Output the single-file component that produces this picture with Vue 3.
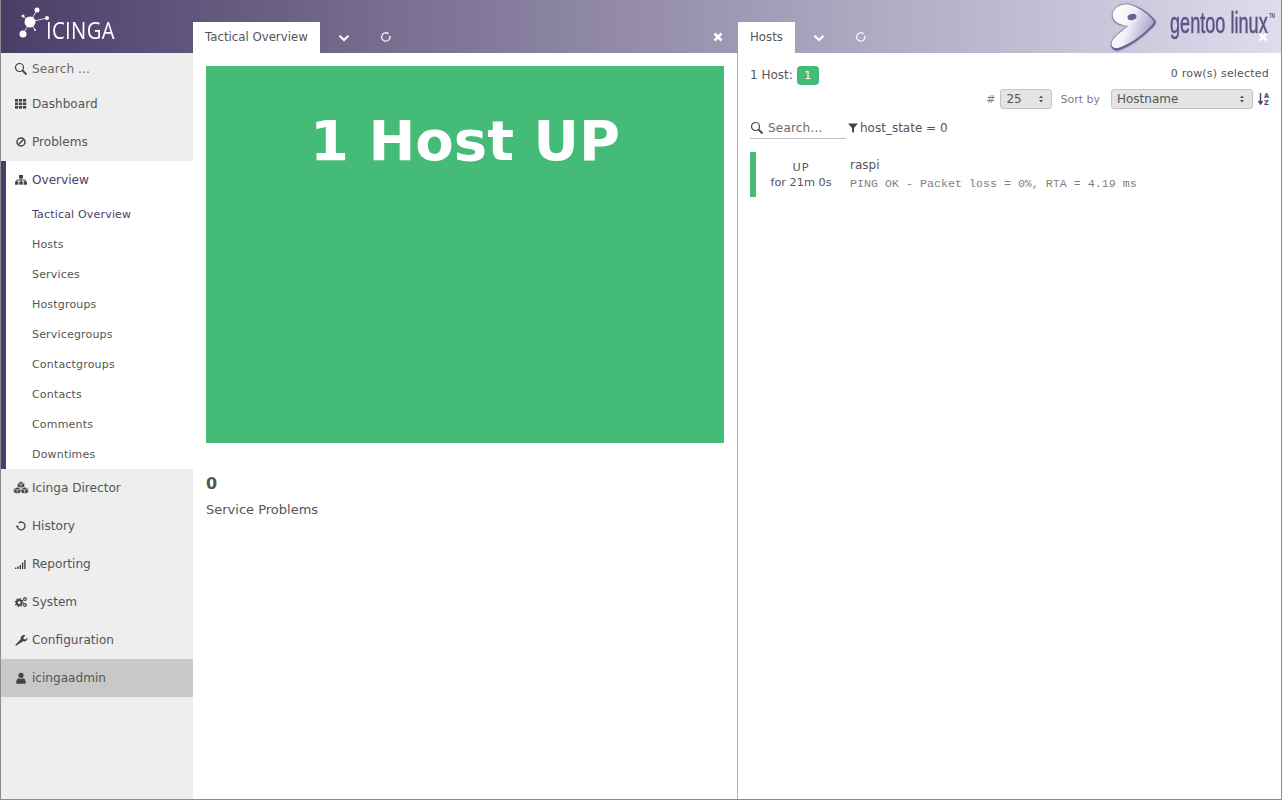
<script setup>
import { ref } from "vue";

// top level menu, the ones above and below the open Overview section
const topItems = ref([
  { label: "Dashboard", icon: "grid" },
  { label: "Problems", icon: "ban" },
]);
const subItems = ref([
  "Tactical Overview",
  "Hosts",
  "Services",
  "Hostgroups",
  "Servicegroups",
  "Contactgroups",
  "Contacts",
  "Comments",
  "Downtimes",
]);
const bottomItems = ref([
  { label: "Icinga Director", icon: "cubes" },
  { label: "History", icon: "history" },
  { label: "Reporting", icon: "signal" },
  { label: "System", icon: "cogs" },
  { label: "Configuration", icon: "wrench" },
]);
</script>

<template>
  <div class="window">
    <header class="topbar">
      <!-- theme logo sits behind the tab bar actions -->
      <div class="gentoo">
        <svg width="60" height="53" viewBox="0 0 60 53">
          <defs>
            <linearGradient id="gbody" x1="0" y1="0" x2="1" y2="0.4">
              <stop offset="0" stop-color="#ffffff" />
              <stop offset="0.5" stop-color="#f4f2f9" />
              <stop offset="1" stop-color="#aaa3cb" />
            </linearGradient>
            <filter id="gshade" x="-20%" y="-20%" width="140%" height="140%">
              <feGaussianBlur stdDeviation="1.300" />
            </filter>
          </defs>
          <path d="M12 15C13 8 21 3 29 4 39 6 50 14 55 20c2 3 0 5-3 8C43 37 31 46 20 50c-5 2-9-1-9-6 0-5 7-11 17-18C20 26 12 23 12 15z" fill="#6a6194" opacity="0.55" filter="url(#gshade)" />
          <path d="M12 15C13 8 21 3 29 4 39 6 50 14 55 20c2 3 0 5-3 8C43 37 31 46 20 50c-5 2-9-1-9-6 0-5 7-11 17-18C20 26 12 23 12 15z" fill="#6a6194" />
          <path d="M12.500 14.500C13.500 8 21 3.500 29 4.500 38 6.500 48 14 53 20c1.500 2.500 0 4-3 7C42 35.500 30 44 19.500 47.500c-4.500 1.500-8 0-8-4 0-4 7-10.500 17-17.500C20.500 25.500 12.500 22 12.500 14.500z" fill="url(#gbody)" />
          <ellipse cx="32" cy="17" rx="4.500" ry="3" fill="#6b6294" transform="rotate(-12 32 17)" />
        </svg>
        <span class="gentoo-word">gentoo linux</span>
        <span class="gentoo-tm">TM</span>
      </div>
      <div class="brand">
        <svg class="brand-mark" width="34" height="34" viewBox="18 6 34 34">
          <g stroke="#fff" stroke-width="0.800">
            <line x1="30" y1="22" x2="23" y2="16" />
            <line x1="30" y1="22" x2="37" y2="10" />
            <line x1="30" y1="22" x2="47" y2="18" />
            <line x1="30" y1="22" x2="23" y2="34" />
            <line x1="30" y1="22" x2="35" y2="30" />
          </g>
          <circle cx="30" cy="22" r="5.500" fill="#fff" />
          <circle cx="23" cy="34" r="3.500" fill="#fff" />
          <circle cx="37" cy="10" r="2.500" fill="#fff" />
          <circle cx="47" cy="18" r="2" fill="#fff" />
          <circle cx="23" cy="16" r="1.500" fill="#fff" />
          <circle cx="35" cy="30" r="1" fill="#fff" />
        </svg>
        <span class="brand-word">ICINGA</span>
      </div>
      <div class="tabs tabs-main">
        <div class="tab">Tactical Overview</div>
        <svg class="act chevron" width="12" height="8" viewBox="0 0 12 8"><path d="M1.500 1.800 6 6l4.500-4.200" /></svg>
        <svg class="act reload" width="12" height="12" viewBox="0 0 12 12"><path d="M10 6.500A4.200 4.200 0 1 1 8.600 2.800" /><path class="fill" d="M11.400 6.600 8.400 6.600 9.900 4.400z" /></svg>
        <svg class="act close" width="10" height="10" viewBox="0 0 10 10"><path d="M1.500 1.500l7 7M8.500 1.500l-7 7" /></svg>
      </div>
      <div class="tabs tabs-side">
        <div class="tab">Hosts</div>
        <svg class="act chevron" width="12" height="8" viewBox="0 0 12 8"><path d="M1.500 1.800 6 6l4.500-4.200" /></svg>
        <svg class="act reload" width="12" height="12" viewBox="0 0 12 12"><path d="M10 6.500A4.200 4.200 0 1 1 8.600 2.800" /><path class="fill" d="M11.400 6.600 8.400 6.600 9.900 4.400z" /></svg>
        <svg class="act close" width="10" height="10" viewBox="0 0 10 10"><path d="M1.500 1.500l7 7M8.500 1.500l-7 7" /></svg>
      </div>
    </header>

    <div class="body">
      <aside class="sidebar">
        <div class="search">
          <svg class="nav-icon" width="14" height="14" viewBox="0 0 14 14"><circle cx="5.500" cy="5.500" r="4" fill="none" stroke="#444" stroke-width="1.200" /><path d="M8.500 8.500l4 4" stroke="#444" stroke-width="1.800" /></svg>
          <span>Search ...</span>
        </div>
        <div v-for="item in topItems" :key="item.label" class="nav-row">
          <svg class="nav-icon" width="14" height="14" viewBox="0 0 14 14"><use :href="'#i-' + item.icon" /></svg>
          <span>{{ item.label }}</span>
        </div>
        <section class="open-section">
          <div class="nav-row open-title">
            <svg class="nav-icon" width="14" height="14" viewBox="0 0 14 14"><use href="#i-sitemap" /></svg>
            <span>Overview</span>
          </div>
          <div
            v-for="(sub, i) in subItems"
            :key="sub"
            class="sub-row"
            :class="{ active: i === 0 }"
          >
            {{ sub }}
          </div>
        </section>
        <div v-for="item in bottomItems" :key="item.label" class="nav-row">
          <svg class="nav-icon" width="14" height="14" viewBox="0 0 14 14"><use :href="'#i-' + item.icon" /></svg>
          <span>{{ item.label }}</span>
        </div>
        <div class="nav-row user-row">
          <svg class="nav-icon" width="14" height="14" viewBox="0 0 14 14"><use href="#i-user" /></svg>
          <span>icingaadmin</span>
        </div>
      </aside>

      <main class="col-main">
        <div class="tile">1 Host UP</div>
        <div class="count">0</div>
        <div class="count-label">Service Problems</div>
      </main>

      <section class="col-side">
        <div class="summary-row">
          <div class="summary">1 Host: <span class="badge">1</span></div>
          <div class="selected">0 row(s) selected</div>
        </div>
        <div class="controls">
          <span class="ctl-label">#</span>
          <div class="select select-small"><span>25</span><svg width="6" height="8" viewBox="0 0 6 8"><path d="M3 0.500 5 3H1zM3 7.500 1 5h4z" /></svg></div>
          <span class="ctl-label sort-label">Sort by</span>
          <div class="select select-large"><span>Hostname</span><svg width="6" height="8" viewBox="0 0 6 8"><path d="M3 0.500 5 3H1zM3 7.500 1 5h4z" /></svg></div>
          <svg class="sort-icon" width="12" height="14" viewBox="0 0 12 14">
            <path d="M2.500 1v10M0.500 9l2 3 2-3" fill="none" stroke="#4a3f6b" stroke-width="1.400" />
            <text x="6" y="6" class="az">A</text>
            <text x="6" y="13" class="az">Z</text>
          </svg>
        </div>
        <div class="filter-row">
          <div class="list-search">
            <svg width="14" height="14" viewBox="0 0 14 14"><circle cx="5.500" cy="5.500" r="4" fill="none" stroke="#444" stroke-width="1.200" /><path d="M8.500 8.500l4 4" stroke="#444" stroke-width="1.800" /></svg>
            <span>Search...</span>
          </div>
          <div class="filter">
            <svg width="10" height="10" viewBox="0 0 10 10"><path d="M0 0.500h10L6 5v5L4 8.500V5z" fill="#444" /></svg>
            <span>host_state = 0</span>
          </div>
        </div>
        <div class="host-row">
          <div class="host-state">
            <div class="state-name">UP</div>
            <div class="state-since">for 21m 0s</div>
          </div>
          <div class="host-info">
            <div class="host-name">raspi</div>
            <div class="host-output">PING OK - Packet loss = 0%, RTA = 4.19 ms</div>
          </div>
        </div>
      </section>
    </div>

    <!-- shared icon shapes -->
    <svg class="defs" width="0" height="0">
      <defs>
        <g id="i-grid" fill="#444">
          <rect x="1" y="2" width="3.200" height="2.600" /><rect x="5" y="2" width="3.200" height="2.600" /><rect x="9" y="2" width="3.200" height="2.600" />
          <rect x="1" y="5.500" width="3.200" height="2.600" /><rect x="5" y="5.500" width="3.200" height="2.600" /><rect x="9" y="5.500" width="3.200" height="2.600" />
          <rect x="1" y="9" width="3.200" height="2.600" /><rect x="5" y="9" width="3.200" height="2.600" /><rect x="9" y="9" width="3.200" height="2.600" />
        </g>
        <g id="i-ban" fill="none" stroke="#444" stroke-width="1.500">
          <circle cx="7" cy="7" r="4" /><path d="M4.300 9.700l5.400-5.400" />
        </g>
        <g id="i-sitemap">
          <rect x="5" y="2" width="4" height="3.500" fill="#444" />
          <path d="M2.800 9V7h8.400v2M7 5v4" fill="none" stroke="#444" />
          <rect x="1" y="8.500" width="3.400" height="3.200" fill="#444" /><rect x="5.300" y="8.500" width="3.400" height="3.200" fill="#444" /><rect x="9.600" y="8.500" width="3.400" height="3.200" fill="#444" />
        </g>
        <g id="i-cubes" fill="#444" stroke="#eee" stroke-width="0.700">
          <path d="M7 0.500l3.700 1.500v4L7 7.500 3.300 6V2z" />
          <path d="M3.300 6l3.700 1.500v4L3.300 13-.4 11.500v-4z" />
          <path d="M10.700 6l3.700 1.500v4L10.700 13 7 11.500v-4z" />
          <path d="M3.300 2 7 3.500 10.700 2M7 3.500V7.500M-.4 7.500l3.700 1.500L7 7.500M3.300 9v4M7 7.500l3.700 1.500 3.700-1.500M10.700 9v4" fill="none" />
        </g>
        <g id="i-history" fill="none" stroke="#444" stroke-width="1.300">
          <path d="M3.300 7.500A3.900 3.900 0 1 0 4.700 3.900" />
          <path d="M1.500 6.800h3.500L3.300 9z" fill="#444" stroke="none" />
        </g>
        <g id="i-signal" fill="#444">
          <rect x="1" y="10.500" width="1.400" height="1.500" /><rect x="3.300" y="9.500" width="1.400" height="2.500" /><rect x="5.600" y="8" width="1.400" height="4" /><rect x="7.900" y="5.500" width="1.400" height="6.500" /><rect x="10.200" y="3" width="1.400" height="9" />
        </g>
        <g id="i-cogs" fill="none" stroke="#444">
          <circle cx="5.200" cy="7.500" r="2.500" stroke-width="2" />
          <circle cx="5.200" cy="7.500" r="4" stroke-width="1.200" stroke-dasharray="1.500 1.600" />
          <circle cx="11" cy="4" r="1.400" stroke-width="1.100" />
          <circle cx="11" cy="10" r="1.400" stroke-width="1.100" />
        </g>
        <g id="i-wrench" fill="#444">
          <path d="M2 12.800 1.200 12 6.700 6.300C6.200 4.500 7.600 2 10.200 2c.5 0 1 .1 1.300.3L9.400 4.400l.4 1.700 1.700.4 2-2.100c.4 2.700-1.900 4.500-4.300 3.900z" />
        </g>
        <g id="i-user" fill="#444">
          <circle cx="7" cy="4.300" r="2.600" />
          <path d="M2.200 12c0-3 1.200-4.800 3-4.800.6.500 1.100.7 1.800.7s1.200-.2 1.800-.7c1.800 0 3 1.800 3 4.800 0 .5-.3.800-.8.800H3c-.5 0-.8-.3-.8-.8z" />
        </g>
      </defs>
    </svg>
  </div>
</template>

<style>
html,
body {
  margin: 0;
  background: #fff;
}
</style>

<style scoped>
.window {
  width: 1282px;
  height: 800px;
  box-sizing: border-box;
  border: 1px solid #8c8c8c;
  border-top: none;
  display: flex;
  flex-direction: column;
  overflow: hidden;
  font-family: "DejaVu Sans", sans-serif;
  color: #555;
  background: #fff;
}
.defs {
  position: absolute;
}

/* header */
.topbar {
  position: relative;
  height: 53px;
  flex: none;
  display: flex;
  background: linear-gradient(to right, #4a3e68, #dfdced);
}
.brand {
  width: 192px;
  flex: none;
  position: relative;
}
.brand-mark {
  position: absolute;
  left: 17px;
  top: 6px;
}
.brand-word {
  position: absolute;
  left: 45px;
  top: 15px;
  font-family: "Open Sans", sans-serif;
  font-size: 23px;
  line-height: 30px;
  color: #fff;
  letter-spacing: 0.400px;
  transform: scaleX(0.88);
  transform-origin: left;
}
.tabs {
  display: flex;
  align-items: flex-end;
  position: relative;
  height: 53px;
}
.tabs-main {
  width: 545px;
}
.tabs-side {
  flex: 1;
}
.tab {
  height: 31px;
  line-height: 30px;
  padding: 0 12px;
  background: #fff;
  font-size: 11.750px;
  color: #555;
}
.act {
  position: absolute;
  top: 32px;
  fill: none;
  stroke: #fff;
  stroke-width: 2.200;
}
.act .fill {
  fill: #fff;
  stroke: none;
}
.reload {
  top: 31px;
  stroke-width: 1.300;
  opacity: 0.9;
}
.close {
  top: 32px;
  stroke-width: 2.500;
}
.tabs-main .chevron {
  left: 145px;
  top: 34px;
}
.tabs-main .reload {
  left: 187px;
}
.tabs-main .close {
  left: 520px;
}
.tabs-side .chevron {
  left: 75px;
  top: 34px;
}
.tabs-side .reload {
  left: 117px;
}
.tabs-side .close {
  left: 520px;
}
.gentoo {
  position: absolute;
  left: 1099px;
  top: 0;
  width: 176px;
  height: 53px;
}
.gentoo-word {
  position: absolute;
  left: 70px;
  top: 9px;
  font-family: "Liberation Sans", sans-serif;
  font-size: 29px;
  line-height: 29px;
  color: #5d5385;
  white-space: nowrap;
  transform: scaleX(0.625);
  transform-origin: left;
  -webkit-text-stroke: 0.500px #5d5385;
}
.gentoo-tm {
  position: absolute;
  left: 169px;
  top: 12px;
  font-family: "Liberation Sans", sans-serif;
  font-size: 7px;
  line-height: 7px;
  font-weight: bold;
  color: #5d5385;
  transform: scaleX(0.6);
  transform-origin: left;
}

/* layout */
.body {
  flex: 1;
  display: flex;
  min-height: 0;
}
.sidebar {
  width: 192px;
  flex: none;
  background: #eeeeee;
  font-size: 12.100px;
}
.search,
.nav-row {
  display: flex;
  align-items: center;
  padding-left: 13px;
}
.search {
  height: 32px;
  color: #6a6a6a;
  letter-spacing: 0.100px;
}
.nav-row {
  height: 38px;
}
.nav-icon {
  width: 14px;
  height: 14px;
  margin-right: 4px;
  flex: none;
  overflow: visible;
}
.open-section {
  background: #fff;
  border-left: 5px solid #4a3e68;
  height: 308px;
  box-sizing: border-box;
  color: #4a3e68;
}
.open-title {
  height: 37px;
  margin-bottom: 1px;
  padding-left: 8px;
}
.sub-row {
  height: 30px;
  line-height: 31px;
  padding-left: 26px;
  font-size: 11px;
  letter-spacing: 0.180px;
  color: #555;
}
.sub-row.active {
  color: #4a3e68;
}
.user-row {
  background: #c8c8c8;
}

/* main column */
.col-main {
  width: 545px;
  flex: none;
  box-sizing: border-box;
  border-right: 1px solid #b4b4b4;
  padding: 13px 13px 0;
}
.tile {
  height: 377px;
  width: 518px;
  background: #44bb77;
  color: #fff;
  font-size: 56px;
  font-weight: bold;
  text-align: center;
  padding-top: 40px;
  box-sizing: border-box;
  line-height: 70px;
}
.count {
  margin-top: 30px;
  font-size: 16px;
  font-weight: bold;
  line-height: 21px;
}
.count-label {
  margin-top: 6px;
  font-size: 13px;
  line-height: 20px;
}

/* hosts column */
.col-side {
  flex: 1;
  min-width: 0;
  padding: 12px 12px 0;
  font-size: 12px;
}
.summary-row {
  display: flex;
  justify-content: space-between;
  height: 20px;
  align-items: center;
}
.summary {
  display: flex;
  align-items: center;
  gap: 4px;
  font-size: 12px;
}
.badge {
  display: inline-block;
  width: 22px;
  height: 19px;
  line-height: 19px;
  border-radius: 4px;
  background: #44bb77;
  color: #fff;
  font-size: 11px;
  text-align: center;
}
.selected {
  font-size: 11px;
  letter-spacing: 0.200px;
  position: relative;
  top: -2px;
}
.controls {
  display: flex;
  justify-content: flex-end;
  align-items: center;
  height: 20px;
  margin-top: 4px;
}
.ctl-label {
  font-size: 11px;
  color: #7f7f7f;
}
.select {
  height: 20px;
  box-sizing: border-box;
  border: 1px solid #c4c4c4;
  border-radius: 3px;
  background: #e4e4e4;
  display: flex;
  align-items: center;
  justify-content: space-between;
  padding: 0 7px 0 5px;
  font-size: 12px;
  color: #555;
}
.select svg {
  fill: #555;
}
.select-small {
  width: 52px;
  margin-left: 5px;
}
.sort-label {
  margin-left: 8px;
}
.select-large {
  width: 142px;
  margin-left: 11px;
}
.sort-icon {
  margin-left: 5px;
  margin-right: -1px;
}
.az {
  font-size: 6.500px;
  font-weight: bold;
  fill: #4a3e68;
}
.filter-row {
  display: flex;
  align-items: flex-start;
  margin-top: 9px;
  height: 30px;
}
.list-search {
  width: 96px;
  height: 21px;
  box-sizing: border-box;
  border-bottom: 1px solid #bdbdbd;
  display: flex;
  align-items: center;
  gap: 4px;
  color: #6a6a6a;
  letter-spacing: 0.200px;
}
.filter {
  margin-left: 2px;
  height: 20px;
  display: flex;
  align-items: center;
  gap: 2px;
}
.host-row {
  display: flex;
  height: 45px;
  margin-top: 4px;
  border-left: 6px solid #44bb77;
}
.host-state {
  width: 90px;
  flex: none;
  text-align: center;
  font-size: 11.300px;
  padding-top: 9px;
  box-sizing: border-box;
}
.state-name {
  line-height: 14px;
  letter-spacing: 1px;
}
.state-since {
  line-height: 16px;
}
.host-info {
  padding: 4px 0 0 4px;
}
.host-name {
  line-height: 18px;
}
.host-output {
  margin-top: 2px;
  line-height: 16px;
  font-family: "Liberation Mono", monospace;
  font-size: 11.670px;
  color: #7f7f7f;
}
</style>
